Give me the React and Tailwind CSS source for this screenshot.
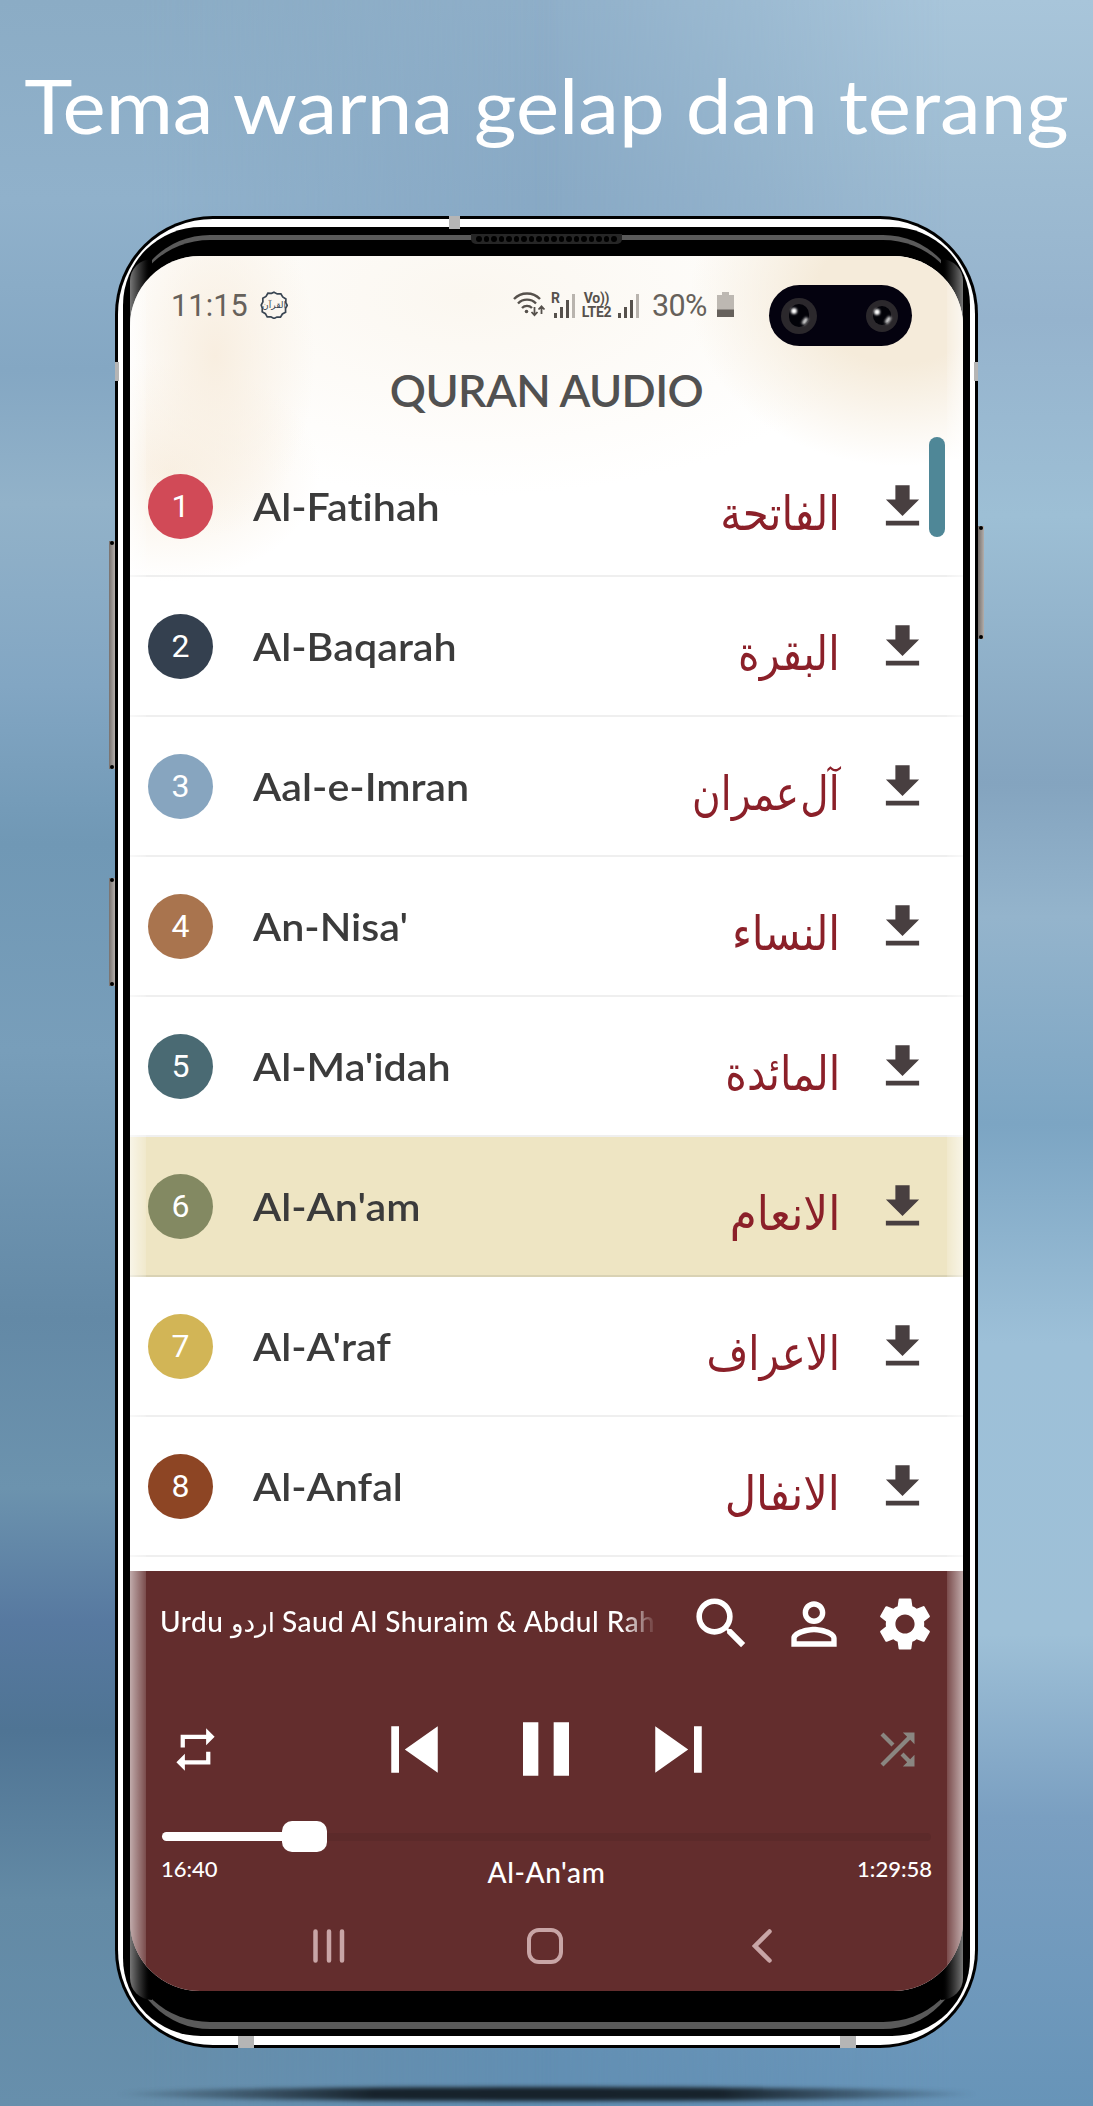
import React, { useState } from 'react';
import {
  MdFileDownload, MdSearch, MdPersonOutline, MdSettings, MdRepeat,
  MdSkipPrevious, MdPause, MdSkipNext, MdShuffle
} from 'react-icons/md';

const surahs = [
  { id: 1, name: 'Al-Fatihah', arabic: 'الفاتحة', dot: 'bg-[#d14a57]', stretch: 'scale-x-[1]' },
  { id: 2, name: 'Al-Baqarah', arabic: 'البقرة', dot: 'bg-[#34404f]', stretch: 'scale-x-[0.98]' },
  { id: 3, name: 'Aal-e-Imran', arabic: 'آل عمران', dot: 'bg-[#87a5bf]', stretch: 'scale-x-[0.93] [word-spacing:-12px]' },
  { id: 4, name: "An-Nisa'", arabic: 'النساء', dot: 'bg-[#a9744e]', stretch: 'scale-x-[1.01]' },
  { id: 5, name: "Al-Ma'idah", arabic: 'المائدة', dot: 'bg-[#4a6a73]', stretch: 'scale-x-[0.98]' },
  { id: 6, name: "Al-An'am", arabic: 'الانعام', dot: 'bg-[#838962]', stretch: 'scale-x-[1.04]' },
  { id: 7, name: "Al-A'raf", arabic: 'الاعراف', dot: 'bg-[#d2b556]', stretch: 'scale-x-[0.96]' },
  { id: 8, name: 'Al-Anfal', arabic: 'الانفال', dot: 'bg-[#8d4524]', stretch: 'scale-x-[1.03]' },
];

function Backdrop() {
  return (
    <div className="absolute inset-0 bg-[linear-gradient(to_bottom,#8fafc9_0,#88a9c5_200px,#7ba0bd_1000px,#628fb3_2060px,#628fb3_100%)]">
      <div className="absolute inset-y-0 left-0 w-[560px] [mask-image:linear-gradient(to_left,transparent,black_75%)] bg-[linear-gradient(to_bottom,#8bacc5_0,#90b1cb_200px,#84a7c3_370px,#92b2c9_504px,#82a6c3_686px,#7098b5_844px,#789eba_1051px,#6389a6_1318px,#6c93ae_1488px,#5779a0_1622px,#4f7494_1731px,#638aa5_1900px,#678fac_2106px)]" />
      <div className="absolute inset-y-0 right-0 w-[560px] [mask-image:linear-gradient(to_right,transparent,black_75%)] bg-[linear-gradient(to_bottom,#a8c5da_0,#9fbdd3_150px,#95b3cd_320px,#9dbfd5_516px,#84a4bf_783px,#94b4cc_917px,#7ca5c3_1124px,#9dc0d8_1343px,#9ec0d7_1634px,#7a9fc1_1817px,#6794b8_2106px)]" />
      <div className="absolute top-[2087px] left-[115px] w-[863px] h-[14px] rounded-[50%] blur-[2px] bg-[linear-gradient(to_right,transparent,#17222b_30%,#17222b_70%,transparent)]" />
    </div>
  );
}

function SideButton({ className }) {
  return (
    <div className={`absolute w-[6px] bg-gradient-to-r from-[#77716e] to-[#b3aeab] flex flex-col justify-between items-center ${className}`}>
      <span className="w-1 h-1 rounded-full bg-black" />
      <span className="w-1 h-1 rounded-full bg-black" />
    </div>
  );
}

function Lens({ className }) {
  return (
    <div className={`rounded-full bg-[#2b282c] flex items-center justify-center ${className}`}>
      <div className="relative w-[56%] h-[62%] rounded-full bg-[#020208]">
        <span className="absolute left-[8%] top-[16%] w-[6px] h-[6px] rounded-full bg-white blur-[1px]" />
        <span className="absolute right-[8%] bottom-[8%] w-[4px] h-[8px] rounded-full bg-[#cfcfcf] rotate-[35deg] blur-[1px]" />
      </div>
    </div>
  );
}

function Camera() {
  return (
    <div className="absolute left-[639px] top-[29px] w-[143px] h-[61px] rounded-full bg-[#04020f] flex items-center justify-between pl-[12px] pr-[14px]">
      <Lens className="w-[36px] h-[36px]" />
      <Lens className="w-[32px] h-[32px]" />
    </div>
  );
}

function Signal() {
  return (
    <svg viewBox="0 0 22 24" className="w-[22px] h-[24px]">
      <rect x="0" y="19" width="3" height="5" fill="#56514c" />
      <rect x="6" y="13" width="3" height="11" fill="#56514c" />
      <rect x="12" y="6" width="3" height="18" fill="#56514c" />
      <rect x="18" y="0" width="3" height="24" fill="#b9b4ae" />
    </svg>
  );
}

function StatusBar() {
  return (
    <div className="h-[98px] pl-[41px] pt-[32px] flex items-start text-[#56514c] font-[Roboto,sans-serif]">
      <span className="w-[86px] text-[30.5px] leading-[36px] tracking-[0.2px] text-[#66615b]">11:15</span>
      <div className="relative ml-[3px] mt-[3px] w-[28px] h-[28px] flex items-center justify-center">
        <svg viewBox="0 0 28 28" className="absolute inset-0 w-[28px] h-[28px]" fill="none" stroke="#3a4653" strokeWidth="1.7">
          <path d="M14 1.2l3.2 1.7 3.7-.1 1.8 3.2 3.2 1.9-.1 3.6 1.4 2.9-1.7 3.1.1 3.7-3.2 1.8-1.9 3.2-3.6-.1-2.9 1.4-3.1-1.7-3.7.1-1.8-3.2-3.2-1.9.1-3.6L1.2 14l1.7-3.1-.1-3.7L6 5.4l1.9-3.2 3.6.1z" />
        </svg>
        <span className="text-[9px] leading-[14px] text-[#3a4653] font-['DejaVu_Sans',sans-serif] whitespace-nowrap">القرآن</span>
      </div>
      <svg viewBox="0 0 34 26" className="ml-[225px] mt-[4px] w-[34px] h-[26px]" fill="none" stroke="#56514c" strokeWidth="2.4">
        <path d="M1 7a18 18 0 0 1 26 0M5 11.5a12.5 12.5 0 0 1 18 0M9 16a7 7 0 0 1 10 0" />
        <circle cx="13.5" cy="19.5" r="1.8" fill="#56514c" stroke="none" />
        <path strokeWidth="1.8" d="M21.5 15v8M18.5 20l3 3.2 3-3.2M28.5 22v-7.5M25.5 17.5l3-3.2 3 3.2" />
      </svg>
      <div className="relative ml-[7px] mt-[6px] w-[22px] h-[24px]">
        <Signal />
        <span className="absolute -left-[3px] -top-[3px] text-[14px] leading-[14px] font-bold">R</span>
      </div>
      <div className="ml-[4px] mt-[3px] w-[33px] text-[14px] leading-[14px] font-bold text-center tracking-[-0.3px]">
        <div>Vo))</div>
        <div>LTE2</div>
      </div>
      <div className="ml-[5px] mt-[6px]"><Signal /></div>
      <span className="ml-[12px] w-[56px] text-[30.5px] leading-[36px] tracking-[-0.6px] text-[#66615b]">30%</span>
      <svg viewBox="0 0 17 25" className="ml-[9px] mt-[4px] w-[17px] h-[25px]">
        <path d="M5 0h7v3h5v15H0V3h5z" fill="#bdb8b2" />
        <path d="M0 17.5h17V25H0z" fill="#66615c" />
      </svg>
    </div>
  );
}

function SurahRow({ surah, active, onSelect }) {
  return (
    <button
      onClick={onSelect}
      className={`h-[140px] shrink-0 w-full flex items-center pl-[18px] pr-[32px] border-b-2 text-left ${active ? 'bg-[#eee5c3] border-[#d9d2b4]' : 'border-[#efefef]'}`}
    >
      <span className={`w-[65px] h-[65px] rounded-full flex items-center justify-center text-white font-[Roboto,sans-serif] text-[32px] ${surah.dot}`}>
        {surah.id}
      </span>
      <span className="ml-[40px] text-[38px] font-semibold text-[#3b3b3b] origin-left scale-x-[1.085] [font-variant-ligatures:none]">
        {surah.name}
      </span>
      <span
        dir="rtl"
        className={`ml-auto mr-[34px] mt-[16px] text-[42px] leading-[60px] text-[#8b2029] font-['DejaVu_Sans',sans-serif] whitespace-nowrap origin-right scale-y-[1.12] ${surah.stretch}`}
      >
        {surah.arabic}
      </span>
      <MdFileDownload className="w-[57px] h-[57px] text-[#483f40]" />
    </button>
  );
}

function Player() {
  return (
    <div className="flex-1 bg-[#632d2d] text-white">
      <div className="h-[106px] flex items-center pl-[30px]">
        <div className="w-[497px] pb-[5px] whitespace-nowrap text-[28px] font-medium tracking-[0.5px] [mask-image:linear-gradient(to_right,black_93%,transparent)]">
          Urdu <span className="font-['DejaVu_Sans',sans-serif] font-normal tracking-normal text-[26px]">اردو</span> Saud Al Shuraim &amp; Abdul Rah
        </div>
        <MdSearch className="ml-[31px] w-[67px] h-[67px]" />
        <MdPersonOutline className="ml-[25px] w-[68px] h-[68px]" />
        <MdSettings className="ml-[25px] w-[64px] h-[64px]" />
      </div>
      <div className="h-[144.5px] pt-[1px] flex items-center pl-[40px] pr-[40px]">
        <MdRepeat className="w-[51px] h-[51px]" />
        <MdSkipPrevious className="ml-[147px] w-[93px] h-[93px]" />
        <MdPause className="ml-[39px] w-[92px] h-[92px]" />
        <MdSkipNext className="ml-[40px] w-[93px] h-[93px]" />
        <MdShuffle className="ml-auto w-[51px] h-[51px] text-[#8a8681]" />
      </div>
      <div className="mx-[32px] h-[31px] flex items-center">
        <div className="w-[122px] h-[9px] rounded-l-full bg-white" />
        <div className="w-[45px] h-[31px] -ml-[2px] rounded-[10px] bg-white" />
        <div className="flex-1 h-[8px] bg-[#5c2a2a] rounded-r-full" />
      </div>
      <div className="mx-[31px] h-[50px] flex justify-between items-start font-medium">
        <span className="w-[120px] text-[22px] leading-[33px]">16:40</span>
        <span className="text-[28px] leading-[40px] tracking-[0.6px]">Al-An'am</span>
        <span className="w-[120px] text-[22px] leading-[33px] text-right">1:29:58</span>
      </div>
      <div className="mt-[26px] pl-[183px] flex items-center text-[#c8a5a6]">
        <svg viewBox="0 0 32 34" className="w-[32px] h-[34px]" stroke="currentColor" strokeWidth="4.5" strokeLinecap="round">
          <path d="M2.5 2.5v29M16 2.5v29M29 2.5v29" />
        </svg>
        <div className="ml-[182px] w-[36px] h-[36px] border-[4.5px] border-current rounded-[12px]" />
        <svg viewBox="0 0 20 34" className="ml-[189px] w-[20px] h-[34px]" fill="none" stroke="currentColor" strokeWidth="4.5" strokeLinecap="round">
          <path d="M17.5 2.5L3 17l14.5 14.5" />
        </svg>
      </div>
    </div>
  );
}

function Screen() {
  const [current, setCurrent] = useState(6);
  return (
    <div className="relative w-[833px] h-[1735px] rounded-[70px] overflow-hidden bg-white flex flex-col">
      <div className="absolute inset-x-0 top-0 h-[330px] bg-[radial-gradient(ellipse_100px_180px_at_85px_100px,#f8eee0,transparent),radial-gradient(ellipse_150px_110px_at_40px_215px,#f9f0e3,transparent),radial-gradient(ellipse_210px_170px_at_770px_40px,#f5ebda_40%,transparent),radial-gradient(ellipse_420px_200px_at_340px_40px,#fbf7f0,transparent)]" />
      <div className="relative flex-1 min-h-0 flex flex-col">
        <StatusBar />
        <h2 className="h-[83px] text-center text-[45px] leading-[73px] font-semibold tracking-[-0.6px] text-[#515151]">QURAN AUDIO</h2>
        <div className="relative h-[1133.5px] flex flex-col overflow-hidden">
          {surahs.map(s => (
            <SurahRow key={s.id} surah={s} active={s.id === current} onSelect={() => setCurrent(s.id)} />
          ))}
          <div className="absolute right-[18px] top-0 w-[16px] h-[100px] rounded-full bg-[#4f8797]" />
        </div>
        <Player />
      </div>
      {/* curved glass edges */}
      <div className="absolute inset-y-0 left-0 w-[16px] bg-gradient-to-r from-white/60 to-white/15" />
      <div className="absolute inset-y-0 right-0 w-[16px] bg-gradient-to-l from-white/60 to-white/15" />
      <Camera />
    </div>
  );
}

function Phone() {
  return (
    <div className="relative mx-auto w-[863px] h-[1832px]">
      <SideButton className="-left-[6px] top-[325px] h-[228px]" />
      <SideButton className="-left-[6px] top-[662px] h-[108px]" />
      <SideButton className="-right-[6px] top-[310px] h-[113px]" />
      <div className="w-full h-full rounded-[98px] bg-black p-[3px]">
        <div className="w-full h-full rounded-[95px] bg-white pt-[8px] pb-[9px] px-[5px]">
          <div className="relative w-full h-full rounded-[78px] bg-black pt-[29px] pl-[7px] overflow-hidden">
            <div className="absolute inset-x-[7px] top-[8px] bottom-[7px] rounded-[80px] border-t-[5px] border-b-[7px] border-[#5a5a5a]" />
            <div className="absolute left-[7px] w-[22px] top-[32px] bottom-[36px] rounded-l-[50px] bg-gradient-to-r from-[#777] to-black" />
            <div className="absolute right-[7px] w-[22px] top-[32px] bottom-[36px] rounded-r-[50px] bg-gradient-to-l from-[#777] to-black" />
            <div className="absolute left-[348px] top-[7px] w-[151px] h-[10px] rounded-b-[5px] bg-[#262626] flex items-center justify-center gap-[2px]">
              {Array.from({ length: 19 }, (_, i) => (
                <span key={i} className="w-[5.5px] h-[6px] rounded-full bg-black" />
              ))}
            </div>
            <Screen />
          </div>
        </div>
      </div>
      <span className="absolute left-[334px] top-0 w-[11px] h-[13px] bg-[#b5b5b5]" />
      <span className="absolute left-0 top-[146px] w-[4px] h-[19px] bg-[#b5b5b5]" />
      <span className="absolute right-0 top-[146px] w-[4px] h-[19px] bg-[#b5b5b5]" />
      <span className="absolute left-[123px] bottom-0 w-[16px] h-[12px] bg-[#b5b5b5]" />
      <span className="absolute left-[725px] bottom-0 w-[16px] h-[12px] bg-[#b5b5b5]" />
    </div>
  );
}

export default function App() {
  return (
    <div className="relative w-[1093px] h-[2106px] overflow-hidden font-[Lato,sans-serif]">
      <Backdrop />
      <div className="relative">
        <h1 className="h-[216px] pt-[60px] text-center text-[75px] leading-[90px] text-white whitespace-nowrap scale-x-[1.09]">
          Tema warna gelap dan terang
        </h1>
        <Phone />
      </div>
    </div>
  );
}
